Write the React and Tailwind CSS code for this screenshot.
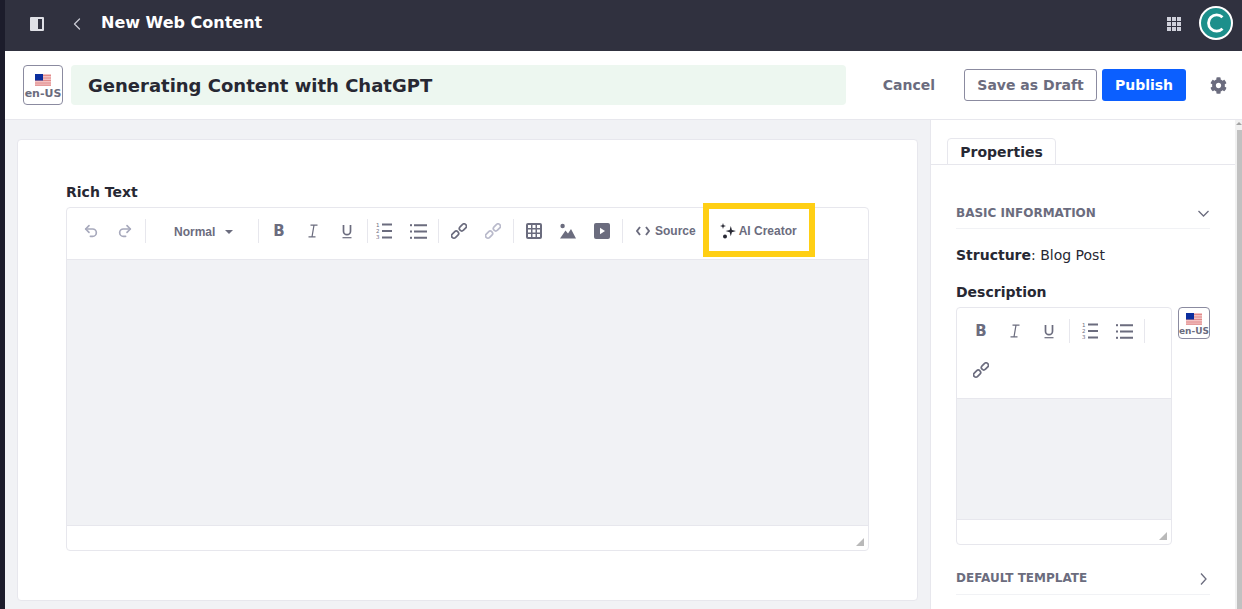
import { ChevronLeft, Redo2, Undo2 } from "lucide-react";
import { FaCog } from "react-icons/fa";

const dejavu = "font-['DejaVu_Sans',sans-serif]";
const arial = "font-['Liberation_Sans',sans-serif]";

function Flag({ className }) {
  return (
    <svg className={className} viewBox="0 0 16 12">
      <rect width="16" height="12" fill="#f3c3c3" />
      <path d="M0 1.5h16M0 4h16M0 6.5h16M0 9h16M0 11.2h16" stroke="#e08a8a" strokeWidth="1" />
      <rect width="8" height="6.5" fill="#0b2e9e" />
    </svg>
  );
}

function LocaleButton({ className, flagClass, textClass }) {
  return (
    <div className={`flex flex-col items-center justify-center shrink-0 bg-white border border-[#8b8ba0] rounded-[4px] ${className}`}>
      <Flag className={flagClass} />
      <span className={`font-bold leading-none whitespace-nowrap text-[#6b6c7e] ${textClass}`}>en-US</span>
    </div>
  );
}

function Sep({ className = "mx-[3px]" }) {
  return <div className={`w-px h-6 bg-[#e7e7ed] shrink-0 ${className}`} />;
}

function Btn({ children }) {
  return <div className="w-[34px] h-8 flex items-center justify-center shrink-0 text-[#6b6c7e]">{children}</div>;
}

function BoldIcon() {
  return <span className={`${dejavu} font-bold text-[15px] leading-none`}>B</span>;
}

function ItalicIcon() {
  return (
    <svg width="14" height="14" viewBox="0 0 14 14" fill="none" stroke="currentColor">
      <path d="M4.5 1.2h7M2.5 12.8h7M8 1.2 6 12.8" strokeWidth="1.2" />
    </svg>
  );
}

function UnderlineIcon() {
  return (
    <svg width="14" height="15" viewBox="0 0 14 15" fill="none" stroke="currentColor">
      <path d="M3.5 1v6.2a3.5 3.5 0 0 0 7 0V1" strokeWidth="1.7" />
      <path d="M2.5 13.7h9" strokeWidth="1.2" />
    </svg>
  );
}

function OrderedIcon() {
  return (
    <svg width="17" height="16" viewBox="0 0 17 16">
      <path d="M6 1.5h10M6 8h10M6 14.5h10" stroke="currentColor" strokeWidth="2" />
      <text x="0" y="4" fontSize="5.5" fontFamily="DejaVu Sans" fill="currentColor">1</text>
      <text x="0" y="10" fontSize="5.5" fontFamily="DejaVu Sans" fill="currentColor">2</text>
      <text x="0" y="16" fontSize="5.5" fontFamily="DejaVu Sans" fill="currentColor">3</text>
    </svg>
  );
}

function BulletIcon() {
  return (
    <svg width="17" height="15" viewBox="0 0 17 15" fill="currentColor">
      <path d="M4 1.2h13M4 7.5h13M4 13.8h13" stroke="currentColor" strokeWidth="2" />
      <rect x="0" y="0.2" width="2" height="2" />
      <rect x="0" y="6.5" width="2" height="2" />
      <rect x="0" y="12.8" width="2" height="2" />
    </svg>
  );
}

function LinkIcon({ className = "" }) {
  return (
    <svg className={className} width="16" height="16" viewBox="0 0 16 16" fill="none" stroke="currentColor" strokeWidth="1.7">
      <rect x="7.2" y="1" width="8" height="4.8" rx="2.4" transform="rotate(-45 11.2 3.4) translate(-0.2 1.2)" />
      <rect x="0.8" y="10.2" width="8" height="4.8" rx="2.4" transform="rotate(-45 4.8 12.6) translate(0.2 -1.2)" />
    </svg>
  );
}

function TableIcon() {
  return (
    <svg width="16" height="16" viewBox="0 0 16 16">
      <rect width="16" height="16" rx="2" fill="currentColor" />
      {[2, 6.5, 11].flatMap((y) =>
        [2, 6.5, 11].map((x) => <rect key={`${x}-${y}`} x={x} y={y} width="3" height="3" fill="#fff" />)
      )}
    </svg>
  );
}

function ImageIcon() {
  return (
    <svg width="16" height="16" viewBox="0 0 16 16" fill="currentColor">
      <circle cx="2.6" cy="3" r="2.2" />
      <path d="M0 15.5 5.5 7.5l2.5 3 3-4.5 5 9.5z" />
    </svg>
  );
}

function VideoIcon() {
  return (
    <svg width="16" height="16" viewBox="0 0 16 16">
      <rect width="16" height="16" rx="2" fill="currentColor" />
      <path d="M6 4.8 11 8 6 11.2z" fill="#fff" />
    </svg>
  );
}

function CodeIcon() {
  return (
    <svg width="14" height="10" viewBox="0 0 14 10" fill="none" stroke="currentColor" strokeWidth="1.9">
      <path d="M4 1 1 5l3 4M10 1l3 4-3 4" />
    </svg>
  );
}

function SparkleIcon() {
  return (
    <svg width="16" height="16" viewBox="0 0 16 16" fill="#272833">
      <path d="M10.8 3 11.9 7 16 8.1 11.9 9.2 10.8 13.2 9.7 9.2 5.6 8.1 9.7 7z" />
      <path d="M3 0 3.7 2.3 6 3 3.7 3.7 3 6 2.3 3.7 0 3 2.3 2.3z" />
      <circle cx="5" cy="13.6" r="2" />
    </svg>
  );
}

function ChevronDownIcon() {
  return (
    <svg className="mt-[5px] mr-px" width="11" height="7" viewBox="0 0 11 7" fill="none" stroke="#6b6c7e" strokeWidth="1.3">
      <path d="M.5 1 5.5 6l5-5" />
    </svg>
  );
}

function ChevronRightIcon() {
  return (
    <svg className="mt-[3px] mr-[3px]" width="7" height="12" viewBox="0 0 7 12" fill="none" stroke="#6b6c7e" strokeWidth="1.3">
      <path d="M1 .5 6 6l-5 5.5" />
    </svg>
  );
}

function Resizer() {
  return (
    <svg className="absolute right-1 bottom-1" width="8" height="8" viewBox="0 0 8 8">
      <path d="M8 0v8H0z" fill="#b9b9b9" />
    </svg>
  );
}

function AccordionHeader({ title, icon, className = "h-6" }) {
  return (
    <div className={`flex items-start justify-between border-b border-[#f1f2f5] text-[#6b6c7e] ${className}`}>
      <span className="text-[12px] font-bold leading-4">{title}</span>
      {icon}
    </div>
  );
}

function TopBar() {
  return (
    <header className="h-[51px] shrink-0 bg-[#30313f] flex items-center pl-[25px] pr-[9px] text-white">
      <svg className="-mt-[3px]" width="14" height="14" viewBox="0 0 14 14" fill="#dfe0e6">
        <path fillRule="evenodd" d="M1 0h12a1 1 0 0 1 1 1v12a1 1 0 0 1-1 1H1a1 1 0 0 1-1-1V1a1 1 0 0 1 1-1Zm7 2v10h4V2Z" />
      </svg>
      <ChevronLeft className="ml-[23px] -mt-[3px] text-[#c9cad4]" size={20} strokeWidth={1.5} />
      <h1 className="ml-[14px] text-[16px] font-bold leading-none -mt-[6px]">New Web Content</h1>
      <div className="ml-auto grid grid-cols-3 gap-px w-[14px] mr-[18px] -mt-[4px]">
        {Array.from({ length: 9 }).map((_, i) => (
          <span key={i} className="w-[4px] h-[4px] bg-[#cfd0da]" />
        ))}
      </div>
      <div className="w-[34px] h-[34px] rounded-full bg-[#1c8f8b] border-2 border-white flex items-center justify-center -mt-[5px]">
        <svg width="20" height="22" viewBox="0 0 20 22" fill="none" stroke="#fff" strokeWidth="2.8">
          <path d="M16.5 5.2A8.2 8.2 0 1 0 16.5 16.8" />
        </svg>
      </div>
    </header>
  );
}

function TitleBar() {
  return (
    <div className="h-[69px] shrink-0 bg-white border-b border-[#e7e7ed] flex items-center pl-[18px] pr-[15px]">
      <LocaleButton className="w-10 h-10 pt-[2px]" flagClass="w-4 h-3 mb-[2px]" textClass="text-[11px]" />
      <div className="ml-2 w-[775px] h-10 pt-px rounded-[4px] bg-[#edf7f0] flex items-center px-[17px]">
        <span className="text-[18px] font-bold text-[#272833] leading-none">Generating Content with ChatGPT</span>
      </div>
      <span className="ml-[37px] text-[14px] font-bold text-[#6b6c7e]">Cancel</span>
      <button className="ml-[29px] h-8 w-[133px] rounded-[3px] border border-[#8b8ba0] bg-white text-[14px] font-bold text-[#6b6c7e]">
        Save as Draft
      </button>
      <button className="ml-[5px] h-8 w-[84px] rounded-[3px] bg-[#0b5fff] text-[14px] font-bold text-white">
        Publish
      </button>
      <FaCog className="ml-[24px] text-[#6b6c7e]" size={17} />
    </div>
  );
}

function MainEditor() {
  return (
    <div className="mt-[5px] border border-[#e7e7ed] rounded-[4px] bg-white flex flex-col">
      <div className="h-[51px] shrink-0 flex items-center pl-[7px] pb-[5px]">
        <Btn><Undo2 className="text-[#a7a9bc]" size={16} strokeWidth={2.5} /></Btn>
        <Btn><Redo2 className="text-[#a7a9bc]" size={16} strokeWidth={2.5} /></Btn>
        <Sep />
        <div className={`${arial} w-[109px] shrink-0 pl-[25px] pt-px flex items-center text-[12px] font-bold text-[#6b6c7e]`}>
          Normal
          <span className="ml-[10px] w-0 h-0 border-x-4 border-x-transparent border-t-[4px] border-t-[#6b6c7e]" />
        </div>
        <Sep className="ml-0 mr-[3px]" />
        <Btn><BoldIcon /></Btn>
        <Btn><ItalicIcon /></Btn>
        <Btn><UnderlineIcon /></Btn>
        <Sep className="ml-[3px] -mr-px" />
        <Btn><OrderedIcon /></Btn>
        <Btn><BulletIcon /></Btn>
        <Sep />
        <Btn><LinkIcon /></Btn>
        <Btn><LinkIcon className="text-[#b9bacb]" /></Btn>
        <Sep />
        <Btn><TableIcon /></Btn>
        <Btn><ImageIcon /></Btn>
        <Btn><VideoIcon /></Btn>
        <Sep />
        <div className={`${arial} ml-[10px] flex items-center gap-[5px] text-[12px] font-bold text-[#6b6c7e]`}>
          <CodeIcon />
          Source
        </div>
        {/* yellow callout over the toolbar */}
        <div className={`${arial} relative ml-[24px] flex items-center gap-[3px] text-[12px] font-bold text-[#6b6c7e]`}>
          <SparkleIcon />
          AI Creator
          <div className="absolute -left-[17px] -top-[19px] w-[112px] h-[54px] border-[6px] border-[#ffcf14]" />
        </div>
      </div>
      <div className="h-[267px] bg-[#f1f2f5] border-y border-[#e7e7ed]" />
      <div className="relative h-[24px]">
        <Resizer />
      </div>
    </div>
  );
}

function Sidebar() {
  return (
    <aside className="w-[312px] shrink-0 bg-white border-l border-[#e7e7ed] flex flex-col relative overflow-hidden">
      {/* scrollbar track, arrow and thumb */}
      <div className="absolute right-0 top-0 bottom-0 w-[7px] bg-[#f1f1f1]">
        <div className="absolute right-0 top-[2px] w-0 h-0 border-x-[3px] border-x-transparent border-b-[3px] border-b-[#a3a3a3]" />
        <div className="absolute right-0 top-[10px] bottom-0 w-[5px] bg-[#c1c1c1]" />
      </div>
      <div className="mt-[18px] h-[27px] border-b border-[#e7e7ed] mr-[7px] pl-4">
        <div className="w-[109px] h-[27px] pt-px bg-white border border-[#e7e7ed] rounded-t-[4px] flex items-center justify-center text-[14px] font-bold text-[#272833]">
          Properties
        </div>
      </div>
      <div className="ml-[25px] w-[254px] mt-[40px]">
        <AccordionHeader title="BASIC INFORMATION" icon={<ChevronDownIcon />} />
        <p className="mt-[16px] text-[14px] leading-5 text-[#272833]">
          <b>Structure</b>: Blog Post
        </p>
        <p className="mt-[17px] text-[14px] leading-5 font-bold text-[#272833]">Description</p>
        <div className="mt-[5px] flex justify-between items-start">
          <div className="w-[216px] border border-[#e7e7ed] rounded-[4px] bg-white">
            <div className="h-[90px] pl-[7px] pt-[7px]">
              <div className="flex items-center">
                <Btn><BoldIcon /></Btn>
                <Btn><ItalicIcon /></Btn>
                <Btn><UnderlineIcon /></Btn>
                <Sep />
                <Btn><OrderedIcon /></Btn>
                <Btn><BulletIcon /></Btn>
                <Sep />
              </div>
              <div className="mt-[7px]">
                <Btn><LinkIcon /></Btn>
              </div>
            </div>
            <div className="h-[122px] bg-[#f1f2f5] border-y border-[#e7e7ed]" />
            <div className="relative h-[24px]">
              <Resizer />
            </div>
          </div>
          <LocaleButton className="w-8 h-8 pt-[3px]" flagClass="w-4 h-3 mb-[2px]" textClass="text-[9px]" />
        </div>
        <div className="mt-[25px]">
          <AccordionHeader className="h-[25px]" title="DEFAULT TEMPLATE" icon={<ChevronRightIcon />} />
        </div>
      </div>
    </aside>
  );
}

export default function App() {
  return (
    <div className={`${dejavu} w-[1242px] h-[609px] overflow-hidden flex bg-[#1c1c2b]`}>
      <div className="w-[5px] shrink-0" />
      <div className="flex-1 min-w-0 flex flex-col">
        <TopBar />
        <TitleBar />
        <div className="flex-1 min-h-0 flex">
          <main className="flex-1 min-w-0 bg-[#f1f2f5] pl-3 pr-3 pt-[19px]">
            <section className="h-[462px] bg-white border border-[#e7e7ed] rounded-[4px] pl-[48px] pr-[48px] pt-[42px]">
              <h2 className="text-[14px] leading-5 font-bold text-[#272833]">Rich Text</h2>
              <MainEditor />
            </section>
          </main>
          <Sidebar />
        </div>
      </div>
    </div>
  );
}
